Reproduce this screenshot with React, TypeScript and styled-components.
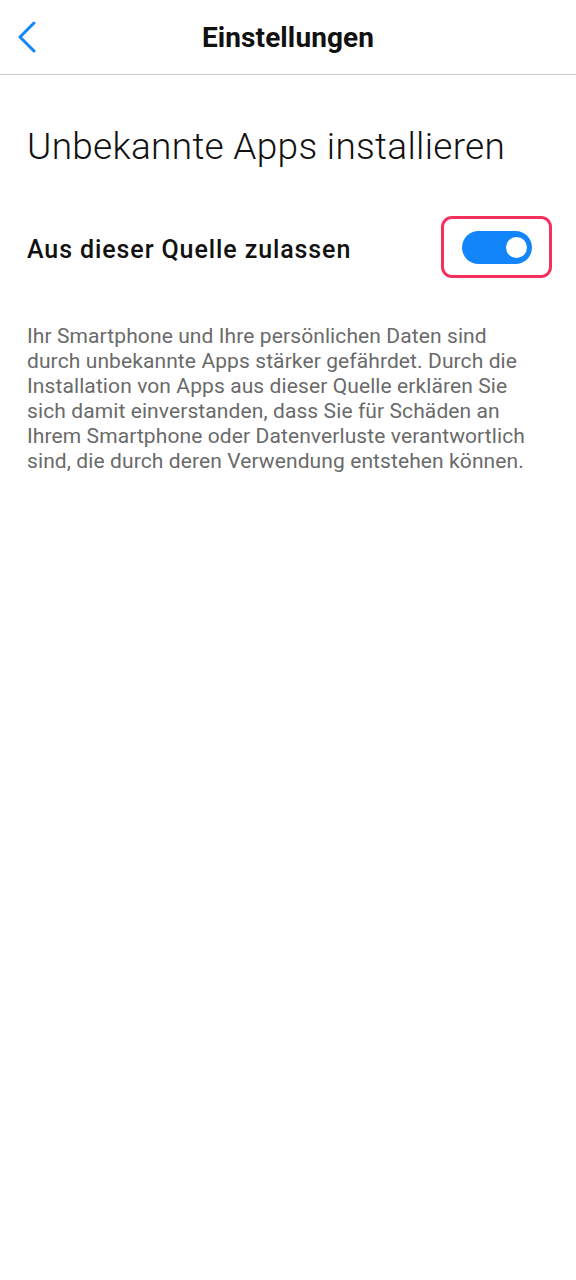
import styled, { createGlobalStyle } from "styled-components";

const GlobalStyle = createGlobalStyle`
    html, body {
        margin: 0;
        padding: 0;
        background: #ffffff;
    }
    body {
        font-family: Roboto, "Noto Sans", "Liberation Sans", sans-serif;
        -webkit-font-smoothing: antialiased;
    }
`;

const Page = styled.div`
    width: 576px;
    min-height: 1280px;
    background: #ffffff;
    display: flex;
    flex-direction: column;
`;

const Header = styled.header`
    height: 75px;
    box-sizing: border-box;
    border-bottom: 1px solid #c9c9c9;
    display: grid;
    grid-template-columns: 60px 1fr 60px;
    align-items: center;
`;

const BackButton = styled.button`
    background: none;
    border: none;
    padding: 0 0 0 17px;
    height: 100%;
    display: flex;
    align-items: center;
    cursor: pointer;
`;

const Title = styled.h1`
    margin: 0;
    text-align: center;
    font-size: 28px;
    font-weight: 700;
    color: #111111;
    letter-spacing: 0.1px;
`;

const Content = styled.main`
    padding: 0 27px;
    display: flex;
    flex-direction: column;
`;

const Heading = styled.h2`
    margin: 50px 0 0;
    font-size: 37px;
    font-weight: 300;
    line-height: 44px;
    letter-spacing: 0.3px;
    color: #111111;
`;

const OptionRow = styled.div`
    margin-top: 47px;
    display: flex;
    align-items: center;
    justify-content: space-between;
`;

const OptionLabel = styled.span`
    padding-top: 5px;
    font-size: 25px;
    font-weight: 500;
    letter-spacing: 0.9px;
    color: #111111;
`;

const Highlight = styled.div`
    margin-right: -3px;
    width: 111px;
    height: 62px;
    box-sizing: border-box;
    border: 3px solid #f5305e;
    border-radius: 11px;
    display: flex;
    align-items: center;
    justify-content: center;
`;

const Track = styled.div<{ $on: boolean }>`
    width: 70px;
    height: 33px;
    border-radius: 17px;
    background: ${(p) => (p.$on ? "#1285fb" : "#c4c4c4")};
    display: flex;
    align-items: center;
    justify-content: ${(p) => (p.$on ? "flex-end" : "flex-start")};
    padding: 0 5px;
    box-sizing: border-box;
`;

const Knob = styled.div`
    width: 21px;
    height: 21px;
    border-radius: 50%;
    background: #ffffff;
`;

const Description = styled.p`
    margin: 46px 0 0;
    font-size: 21px;
    line-height: 25px;
    letter-spacing: 0.1px;
    color: #6a6a6a;
    white-space: nowrap;
`;

const lines = [
    "Ihr Smartphone und Ihre persönlichen Daten sind",
    "durch unbekannte Apps stärker gefährdet. Durch die",
    "Installation von Apps aus dieser Quelle erklären Sie",
    "sich damit einverstanden, dass Sie für Schäden an",
    "Ihrem Smartphone oder Datenverluste verantwortlich",
    "sind, die durch deren Verwendung entstehen können.",
];

export default function App() {
    return (
        <>
            <GlobalStyle />
            <Page>
                <Header>
                    <BackButton aria-label="Zurück">
                        <svg width="20" height="32" viewBox="0 0 20 32" fill="none">
                            <path
                                d="M17 2 L3 16 L17 30"
                                stroke="#1285fb"
                                strokeWidth="3"
                                strokeLinecap="round"
                                strokeLinejoin="round"
                            />
                        </svg>
                    </BackButton>
                    <Title>Einstellungen</Title>
                    <span />
                </Header>
                <Content>
                    <Heading>Unbekannte Apps installieren</Heading>
                    <OptionRow>
                        <OptionLabel>Aus dieser Quelle zulassen</OptionLabel>
                        <Highlight>
                            <Track $on={true}>
                                <Knob />
                            </Track>
                        </Highlight>
                    </OptionRow>
                    <Description>
                        {lines.map((line, i) => (
                            <span key={i}>
                                {line}
                                {i < lines.length - 1 && <br />}
                            </span>
                        ))}
                    </Description>
                </Content>
            </Page>
        </>
    );
}
